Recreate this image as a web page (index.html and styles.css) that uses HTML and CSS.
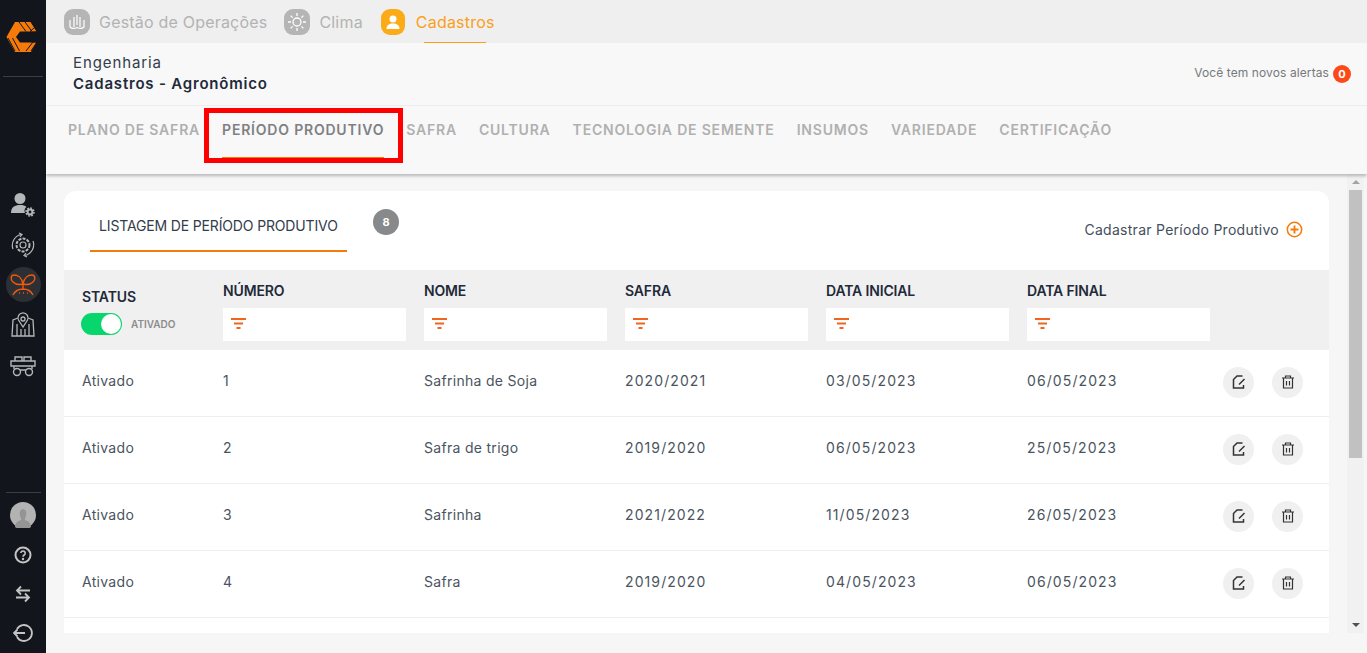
FILE: index.html
```html
<!DOCTYPE html>
<html lang="pt-BR">
<head>
    <meta charset="UTF-8">
    <title>Cadastros - Agronômico</title>
    <link rel="stylesheet" href="styles.css">
</head>
<body>
    <aside class="sidebar">
        <div class="logo">
            <svg width="34" height="32" viewBox="0 0 34 32">
                <path d="M9 1h16l8.500 15L25 31H9L.5 16z" fill="#f47a0c"/>
                <path d="M10 16l4-5.500h10L34 10v12l-10-.5H14z" fill="#12161c"/>
                <path d="M24 10.500L33 16 24 21.500z" fill="#12161c"/>
                <path d="M13 1l7 9.500M19 1l7 9.500M25 1l6 9M28 7l-4 3.500M2 17l7 13M6.500 17l7 13M25 30l6-9M20 30l7-9" stroke="#12161c" stroke-width="1" fill="none"/>
            </svg>
        </div>
        <div class="side-top">
            <button class="side-btn">
                <svg width="26" height="26" viewBox="0 0 26 26"><circle cx="10" cy="6.500" r="5.500" fill="#b4b6b8"/><path d="M1 21c0-6 4-8 9-8 3 0 5 .6 6.500 2-2 1-2.500 4-1.500 6z" fill="#b4b6b8"/><circle cx="20" cy="20" r="2.400" fill="none" stroke="#b4b6b8" stroke-width="2"/><circle cx="20" cy="20" r="4" fill="none" stroke="#b4b6b8" stroke-width="1.500" stroke-dasharray="1.800 1.300"/></svg>
            </button>
            <button class="side-btn">
                <svg width="26" height="26" viewBox="0 0 26 26" fill="none" stroke="#b4b6b8" stroke-width="1.200"><circle cx="13" cy="13" r="3"/><circle cx="13" cy="13" r="6.500" stroke-dasharray="3 1.200" stroke-width="2"/><path d="M3 17A11 11 0 0 1 11 2.500M23 9a11 11 0 0 1-8 14.500M9 1l3 1.500-2 2.500M17 25l-3-1.500 2-2.500"/></svg>
            </button>
            <button class="side-btn active">
                <svg width="26" height="26" viewBox="0 0 26 26" fill="none" stroke="#f0590e" stroke-width="1.400"><path d="M13 12C12 6 8 3 4 3 1 3 0 7 3 10c2 2 6 3 10 2zM13 12c1-6 5-9 9-9 3 0 4 4 1 7-2 2-6 3-10 2zM13 12v6M3 23c2-4 6-6 10-6s8 2 10 6M9 21h1M13 21h1M17 21h1"/></svg>
            </button>
            <button class="side-btn">
                <svg width="26" height="26" viewBox="0 0 26 26" fill="none" stroke="#b4b6b8" stroke-width="1.300"><circle cx="13" cy="7" r="2"/><path d="M13 15L8.500 8a5 5 0 1 1 9 0zM8 6L3 8l-1 16h22l-1-16-5-2M7 12v12M11 17v7M15 17v7M19 12v12"/></svg>
            </button>
            <button class="side-btn">
                <svg width="26" height="24" viewBox="0 0 26 24" fill="none" stroke="#b4b6b8" stroke-width="1.400"><path d="M1 8h24v5H1zM5 8V4h7v4M14 8V4h7v4M4 13v3M22 13v3M10 17h6"/><circle cx="7" cy="19" r="3.500"/><circle cx="19" cy="19" r="3.500"/></svg>
            </button>
        </div>
        <div class="side-bottom">
            <div class="avatar">
                <svg width="26" height="26" viewBox="0 0 26 26"><circle cx="13" cy="13" r="13" fill="#b3b3b3"/><path d="M5 25c0-5 4-6 6-7v-2c-2-2-2-9 2-9s4 7 2 9v2c2 1 6 2 6 7a13 13 0 0 1-16 0z" fill="#949494"/></svg>
            </div>
            <button class="side-btn">
                <svg width="18" height="18" viewBox="0 0 18 18" fill="none" stroke="#c4c4c4" stroke-width="2"><circle cx="9" cy="9" r="7.500"/><path d="M6.800 7a2.200 2.200 0 1 1 3.400 2c-.8.500-1.200 1-1.200 1.800" stroke-width="1.600"/><circle cx="9" cy="13" r=".6" stroke-width="1.200"/></svg>
            </button>
            <button class="side-btn">
                <svg width="18" height="18" viewBox="0 0 18 18" fill="none" stroke="#c4c4c4" stroke-width="1.800"><path d="M16 5.500H3M7 1.500l-4 4 4 4M2 12.500h13M11 8.500l4 4-4 4"/></svg>
            </button>
            <button class="side-btn">
                <svg width="20" height="18" viewBox="0 0 20 18" fill="none" stroke="#c4c4c4" stroke-width="1.800"><path d="M4 5a8 8 0 1 1 0 8M12 9H1M4.500 5.500L1 9l3.500 3.500"/></svg>
            </button>
        </div>
    </aside>

    <div class="main">
        <nav class="topnav">
            <a class="module">
                <span class="module-icon">
                    <svg width="20" height="20" viewBox="0 0 20 20" fill="none" stroke="#fff" stroke-width="1.200"><path d="M3 8v7c2 2 4 2 7 .5 3 1.500 5 1.500 7-.5V8M7 5v10M10 3v10M13 5v10"/></svg>
                </span>
                Gestão de Operações
            </a>
            <a class="module">
                <span class="module-icon">
                    <svg width="20" height="20" viewBox="0 0 20 20" fill="none" stroke="#fff" stroke-width="1.300"><circle cx="10" cy="10" r="4"/><path d="M10 1v3M10 16v3M1 10h3M16 10h3M3.600 3.600l2 2M14.400 14.400l2 2M3.600 16.400l2-2M14.400 5.600l2-2"/></svg>
                </span>
                Clima
            </a>
            <a class="module current">
                <span class="module-icon">
                    <svg width="16" height="16" viewBox="0 0 16 16" fill="#fff"><circle cx="8" cy="5" r="3.500"/><path d="M1.500 15c0-4 3-5.500 6.500-5.500s6.500 1.500 6.500 5.500z"/></svg>
                </span>
                Cadastros
            </a>
        </nav>

        <header class="pagehead">
            <div class="crumbs">
                <div class="crumb-parent">Engenharia</div>
                <div class="crumb-title">Cadastros - Agronômico</div>
            </div>
            <div class="alerts">Você tem novos alertas <span class="alert-count">0</span></div>
        </header>

        <nav class="tabs">
            <a class="tab">PLANO DE SAFRA</a>
            <a class="tab selected">PERÍODO PRODUTIVO</a>
            <a class="tab">SAFRA</a>
            <a class="tab">CULTURA</a>
            <a class="tab">TECNOLOGIA DE SEMENTE</a>
            <a class="tab">INSUMOS</a>
            <a class="tab">VARIEDADE</a>
            <a class="tab">CERTIFICAÇÃO</a>
        </nav>

        <div class="content">
            <section class="card">
                <div class="card-head">
                    <div class="list-tab">LISTAGEM DE PERÍODO PRODUTIVO</div>
                    <span class="count">8</span>
                    <a class="add-link">Cadastrar Período Produtivo
                        <svg width="17" height="17" viewBox="0 0 18 18" fill="none" stroke="#f47a0c" stroke-width="1.600"><circle cx="9" cy="9" r="7.600"/><path d="M9 4.800v8.400M4.800 9h8.400" stroke-width="2"/></svg>
                    </a>
                </div>

                <div class="grid filters">
                    <div class="status-col">
                        <div class="col-title">STATUS</div>
                        <div class="toggle-row"><span class="toggle"></span><span class="toggle-label">ATIVADO</span></div>
                    </div>
                    <div><div class="col-title">NÚMERO</div><div class="filter-box"><svg class="funnel" viewBox="0 0 15 11"><path d="M0 1h15M3 5.500h9M5.500 10h4" stroke="#f0651f" stroke-width="2"/></svg></div></div>
                    <div><div class="col-title">NOME</div><div class="filter-box"><svg class="funnel" viewBox="0 0 15 11"><path d="M0 1h15M3 5.500h9M5.500 10h4" stroke="#f0651f" stroke-width="2"/></svg></div></div>
                    <div><div class="col-title">SAFRA</div><div class="filter-box"><svg class="funnel" viewBox="0 0 15 11"><path d="M0 1h15M3 5.500h9M5.500 10h4" stroke="#f0651f" stroke-width="2"/></svg></div></div>
                    <div><div class="col-title">DATA INICIAL</div><div class="filter-box"><svg class="funnel" viewBox="0 0 15 11"><path d="M0 1h15M3 5.500h9M5.500 10h4" stroke="#f0651f" stroke-width="2"/></svg></div></div>
                    <div><div class="col-title">DATA FINAL</div><div class="filter-box"><svg class="funnel" viewBox="0 0 15 11"><path d="M0 1h15M3 5.500h9M5.500 10h4" stroke="#f0651f" stroke-width="2"/></svg></div></div>
                </div>

                <div class="grid row">
                    <div>Ativado</div><div>1</div><div>Safrinha de Soja</div><div class="num">2020/2021</div><div class="num">03/05/2023</div><div class="num">06/05/2023</div>
                    <div class="actions">
                        <button class="round"><svg width="14" height="14" viewBox="0 0 14 14" fill="none" stroke="#333" stroke-width="1.500"><path d="M11.500 10v3H1.500V4.500L5 1h5.500M7 9.500L12.500 4"/></svg></button>
                        <button class="round"><svg width="14" height="14" viewBox="0 0 14 14" fill="none" stroke="#333" stroke-width="1.200"><path d="M1 3h12M4.500 3V1h5v2M2.500 3v10h9V3M5.500 6v4.500M8.500 6v4.500"/></svg></button>
                    </div>
                </div>
                <div class="grid row">
                    <div>Ativado</div><div>2</div><div>Safra de trigo</div><div class="num">2019/2020</div><div class="num">06/05/2023</div><div class="num">25/05/2023</div>
                    <div class="actions">
                        <button class="round"><svg width="14" height="14" viewBox="0 0 14 14" fill="none" stroke="#333" stroke-width="1.500"><path d="M11.500 10v3H1.500V4.500L5 1h5.500M7 9.500L12.500 4"/></svg></button>
                        <button class="round"><svg width="14" height="14" viewBox="0 0 14 14" fill="none" stroke="#333" stroke-width="1.200"><path d="M1 3h12M4.500 3V1h5v2M2.500 3v10h9V3M5.500 6v4.500M8.500 6v4.500"/></svg></button>
                    </div>
                </div>
                <div class="grid row">
                    <div>Ativado</div><div>3</div><div>Safrinha</div><div class="num">2021/2022</div><div class="num">11/05/2023</div><div class="num">26/05/2023</div>
                    <div class="actions">
                        <button class="round"><svg width="14" height="14" viewBox="0 0 14 14" fill="none" stroke="#333" stroke-width="1.500"><path d="M11.500 10v3H1.500V4.500L5 1h5.500M7 9.500L12.500 4"/></svg></button>
                        <button class="round"><svg width="14" height="14" viewBox="0 0 14 14" fill="none" stroke="#333" stroke-width="1.200"><path d="M1 3h12M4.500 3V1h5v2M2.500 3v10h9V3M5.500 6v4.500M8.500 6v4.500"/></svg></button>
                    </div>
                </div>
                <div class="grid row">
                    <div>Ativado</div><div>4</div><div>Safra</div><div class="num">2019/2020</div><div class="num">04/05/2023</div><div class="num">06/05/2023</div>
                    <div class="actions">
                        <button class="round"><svg width="14" height="14" viewBox="0 0 14 14" fill="none" stroke="#333" stroke-width="1.500"><path d="M11.500 10v3H1.500V4.500L5 1h5.500M7 9.500L12.500 4"/></svg></button>
                        <button class="round"><svg width="14" height="14" viewBox="0 0 14 14" fill="none" stroke="#333" stroke-width="1.200"><path d="M1 3h12M4.500 3V1h5v2M2.500 3v10h9V3M5.500 6v4.500M8.500 6v4.500"/></svg></button>
                    </div>
                </div>
            </section>
            <div class="scrollbar">
                <span class="arrow up"></span>
                <span class="thumb"></span>
                <span class="arrow down"></span>
            </div>
        </div>
    </div>
</body>
</html>
```

FILE: styles.css
```css
* {
    margin: 0;
    padding: 0;
    box-sizing: border-box;
}

html, body {
    height: 100%;
    overflow: hidden;
}

body {
    display: flex;
    font-family: 'Inter', 'Noto Sans', sans-serif;
    background: #f6f6f6;
    color: #1f2a3a;
}

button {
    border: none;
    background: none;
}

.sidebar {
    width: 46px;
    flex-shrink: 0;
    background: #12161c;
    display: flex;
    flex-direction: column;
    align-items: center;
}

.logo {
    width: 40px;
    height: 77px;
    padding-top: 21px;
    text-align: center;
    border-bottom: 1px solid #3b3f44;
}

.side-top {
    margin-top: 110px;
    display: flex;
    flex-direction: column;
    align-items: center;
    gap: 5px;
}

.side-btn {
    width: 35px;
    height: 35px;
    border-radius: 50%;
    display: flex;
    align-items: center;
    justify-content: center;
}

.side-btn.active {
    background: #2c2f33;
}

.side-bottom {
    margin-top: auto;
    width: 35px;
    border-top: 1px solid #3b3f44;
    padding-top: 9px;
    padding-bottom: 3px;
    display: flex;
    flex-direction: column;
    align-items: center;
    gap: 4px;
}

.avatar {
    height: 26px;
    margin-bottom: 5px;
}

.main {
    flex: 1;
    min-width: 0;
    display: flex;
    flex-direction: column;
}

.topnav {
    height: 43px;
    background: #efefef;
    display: flex;
    padding-left: 18px;
    gap: 17px;
}

.module {
    display: flex;
    align-items: center;
    gap: 9px;
    font-size: 16px;
    letter-spacing: .2px;
    color: #b3b3b3;
    height: 43px;
    position: relative;
}

.module-icon {
    width: 26px;
    height: 26px;
    border-radius: 9px;
    background: #b5b5b5;
    display: flex;
    align-items: center;
    justify-content: center;
}

.module.current {
    color: #f9a01b;
    margin-left: 1px;
    gap: 11px;
}

.module.current .module-icon {
    width: 24px;
    background: #fbab18;
}

.module.current::after {
    content: "";
    position: absolute;
    left: 43px;
    right: 9px;
    bottom: 0;
    height: 1px;
    background: #f9a01b;
}

.pagehead {
    height: 63px;
    background: #f8f8f8;
    border-bottom: 1px solid #f0f0f0;
    display: flex;
    align-items: center;
    justify-content: space-between;
    padding: 0 16px 3px 27px;
}

.crumb-parent {
    font-size: 15px;
    letter-spacing: .9px;
    line-height: 21px;
    color: #333d4b;
}

.crumb-title {
    font-size: 15px;
    font-weight: 600;
    letter-spacing: .8px;
    line-height: 21px;
    color: #1f2a3a;
}

.alerts {
    font-size: 12px;
    letter-spacing: .1px;
    color: #77797c;
    display: flex;
    align-items: center;
    gap: 4px;
}

.alert-count {
    width: 18px;
    height: 18px;
    margin-top: 2px;
    border-radius: 50%;
    background: #fb4a1a;
    color: #fff;
    font-size: 11px;
    font-weight: 700;
    display: flex;
    align-items: center;
    justify-content: center;
}

.tabs {
    height: 68px;
    background: #f8f8f8;
    display: flex;
    padding-left: 22px;
    gap: 22px;
    box-shadow: 0 2px 3px rgba(0, 0, 0, .25);
    position: relative;
    z-index: 1;
}

.tab {
    height: 53px;
    padding-top: 15px;
    font-size: 14px;
    font-weight: 600;
    letter-spacing: .8px;
    color: #b0b0b0;
}

.tab.selected {
    color: #7f8083;
    border-bottom: 2px solid #f47a0c;
    position: relative;
}

.tab.selected::before {
    content: "";
    position: absolute;
    left: -18px;
    right: -19px;
    top: 2px;
    height: 45px;
    border: 5px solid #f00;
}

.content {
    flex: 1;
    min-height: 0;
    display: flex;
    padding: 17px 3px 20px 18px;
    gap: 18px;
    overflow: hidden;
}

.card {
    flex: 1;
    min-width: 0;
    background: #fff;
    border-radius: 12px 12px 0 0;
    overflow: hidden;
}

.card-head {
    height: 79px;
    display: flex;
    padding-left: 26px;
    padding-right: 26px;
}

.list-tab {
    width: 257px;
    height: 61px;
    padding: 26px 0 0 9px;
    border-bottom: 2px solid #f47a0c;
    font-size: 14px;
    letter-spacing: -.15px;
    color: #323c4b;
}

.count {
    width: 26px;
    height: 26px;
    margin: 18px 0 0 26px;
    border-radius: 50%;
    background: #87898b;
    color: #fff;
    font-size: 11px;
    font-weight: 700;
    display: flex;
    align-items: center;
    justify-content: center;
}

.add-link {
    margin-left: auto;
    margin-top: 28px;
    height: 20px;
    display: flex;
    align-items: center;
    gap: 7px;
    font-size: 14px;
    letter-spacing: .27px;
    color: #444e5c;
}

.grid {
    display: grid;
    grid-template-columns: 141px 201px 201px 201px 201px 183px 1fr;
    padding-left: 18px;
}

.filters {
    height: 80px;
    background: #f0f0f0;
    padding-top: 11px;
}

.col-title {
    font-size: 14px;
    font-weight: 600;
    letter-spacing: -.15px;
    line-height: 20px;
    color: #1f2a3a;
}

.status-col {
    padding-top: 6px;
}

.filter-box {
    width: 183px;
    height: 33px;
    margin-top: 7px;
    background: #fff;
    padding: 10px 0 0 8px;
}

.funnel {
    display: block;
    width: 15px;
    height: 11px;
}

.toggle-row {
    display: flex;
    align-items: center;
    gap: 9px;
    margin: 6px 0 0 -1px;
}

.toggle {
    width: 41px;
    height: 22px;
    border-radius: 11px;
    background: #06d66b;
    position: relative;
}

.toggle::after {
    content: "";
    position: absolute;
    right: 1px;
    top: 1px;
    width: 20px;
    height: 20px;
    border-radius: 50%;
    background: #fff;
}

.toggle-label {
    font-size: 10px;
    font-weight: 600;
    color: #8c8c8c;
}

.row {
    height: 67px;
    padding-bottom: 6px;
    align-items: center;
    font-size: 14px;
    letter-spacing: .3px;
    color: #4a5460;
    border-bottom: 1px solid #efefef;
}

.num {
    letter-spacing: 1.1px;
}

.row .actions {
    display: flex;
    gap: 18px;
    margin: 4px 0 0 13px;
}

.round {
    width: 31px;
    height: 31px;
    border-radius: 50%;
    background: #f0f0f0;
    display: flex;
    align-items: center;
    justify-content: center;
}

.scrollbar {
    width: 17px;
    margin-top: -17px;
    background: #f1f1f1;
    display: flex;
    flex-direction: column;
    align-items: center;
}

.thumb {
    width: 13px;
    height: 268px;
    background: #c1c1c1;
}

.arrow {
    width: 0;
    height: 0;
    border-left: 4px solid transparent;
    border-right: 4px solid transparent;
    margin: 6px 0;
}

.arrow.up {
    border-bottom: 4px solid #a3a3a3;
}

.arrow.down {
    margin-top: auto;
    border-top: 4px solid #505050;
}
```
